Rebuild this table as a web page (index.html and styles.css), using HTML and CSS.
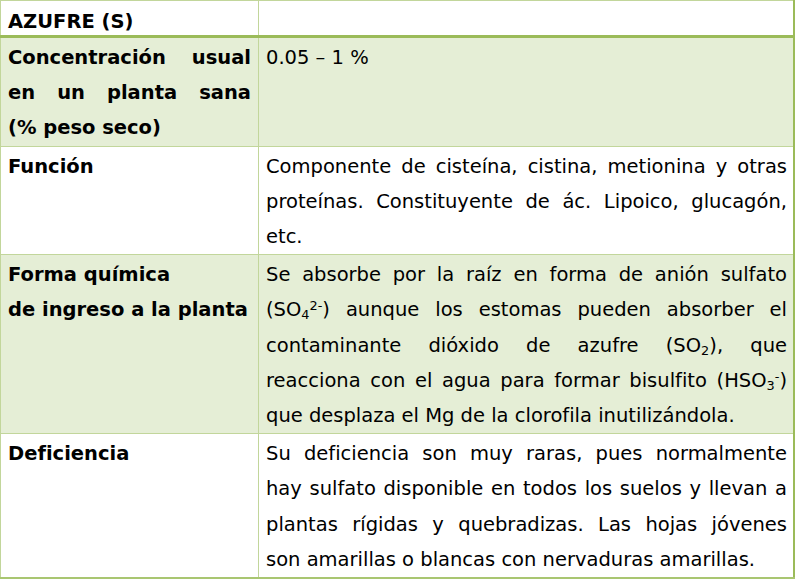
FILE: index.html
```html
<!DOCTYPE html>
<html lang="es">
<head>
<meta charset="utf-8">
<title>Azufre (S)</title>
<link rel="stylesheet" href="styles.css">
</head>
<body>
<table class="tbl">
  <colgroup>
    <col class="c-label">
    <col class="c-value">
  </colgroup>
  <tbody>
    <tr class="row row-head">
      <th class="cell label">AZUFRE (S)</th>
      <td class="cell value"></td>
    </tr>
    <tr class="row row-shade">
      <th class="cell label">
        <span class="ln just">Concentración usual</span>
        <span class="ln just">en un planta sana</span>
        <span class="ln">(% peso seco)</span>
      </th>
      <td class="cell value"><span class="ln">0.05 – 1 %</span></td>
    </tr>
    <tr class="row">
      <th class="cell label"><span class="ln">Función</span></th>
      <td class="cell value">
        <span class="ln just">Componente de cisteína, cistina, metionina y otras</span>
        <span class="ln just">proteínas. Constituyente de ác. Lipoico, glucagón,</span>
        <span class="ln">etc.</span>
      </td>
    </tr>
    <tr class="row row-shade">
      <th class="cell label">
        <span class="ln">Forma química</span>
        <span class="ln">de ingreso a la planta</span>
      </th>
      <td class="cell value">
        <span class="ln just">Se absorbe por la raíz en forma de anión sulfato</span>
        <span class="ln just">(SO<sub>4</sub><sup>2-</sup>) aunque los estomas pueden absorber el</span>
        <span class="ln just">contaminante dióxido de azufre (SO<sub>2</sub>), que</span>
        <span class="ln just">reacciona con el agua para formar bisulfito (HSO<sub>3</sub><sup>-</sup>)</span>
        <span class="ln">que desplaza el Mg de la clorofila inutilizándola.</span>
      </td>
    </tr>
    <tr class="row row-last">
      <th class="cell label"><span class="ln">Deficiencia</span></th>
      <td class="cell value">
        <span class="ln just">Su deficiencia son muy raras, pues normalmente</span>
        <span class="ln just">hay sulfato disponible en todos los suelos y llevan a</span>
        <span class="ln just">plantas rígidas y quebradizas. Las hojas jóvenes</span>
        <span class="ln">son amarillas o blancas con nervaduras amarillas.</span>
      </td>
    </tr>
  </tbody>
</table>
</body>
</html>
```

FILE: styles.css
```css
html, body {
  margin: 0;
  padding: 0;
  background: #ffffff;
}

.tbl {
  border-collapse: collapse;
  table-layout: fixed;
  width: 795px;
  font-family: "DejaVu Sans", Verdana, sans-serif;
  font-size: 19.5px;
  line-height: 35.2px;
  color: #000000;
  border-top: 1px solid #c2d69b;
  border-left: 1px solid #c2d69b;
  border-right: 2px solid #9bbb59;
  border-bottom: 2px solid #a9c671;
}

.c-label { width: 258px; }
.c-value { width: auto; }

.cell {
  padding: 2px 7px 0 7px;
  vertical-align: top;
  text-align: left;
  border-top: 1px solid #c2d69b;
  border-left: 1px solid #c2d69b;
}

.label {
  font-weight: bold;
}

.value {
  font-weight: normal;
  padding-right: 6px;
}

.row-head .cell {
  padding-top: 8px;
  line-height: 26px;
  border-bottom: 3px solid #9bbb59;
  background: #ffffff;
}

.row-shade .cell {
  background: #e5eed6;
}

.ln {
  display: block;
  white-space: nowrap;
}

.just {
  text-align: justify;
  text-align-last: justify;
  white-space: normal;
}

sub, sup {
  font-size: 0.66em;
  line-height: 0;
}

sub {
  vertical-align: -0.25em;
}

sup {
  vertical-align: 0.45em;
}
```
